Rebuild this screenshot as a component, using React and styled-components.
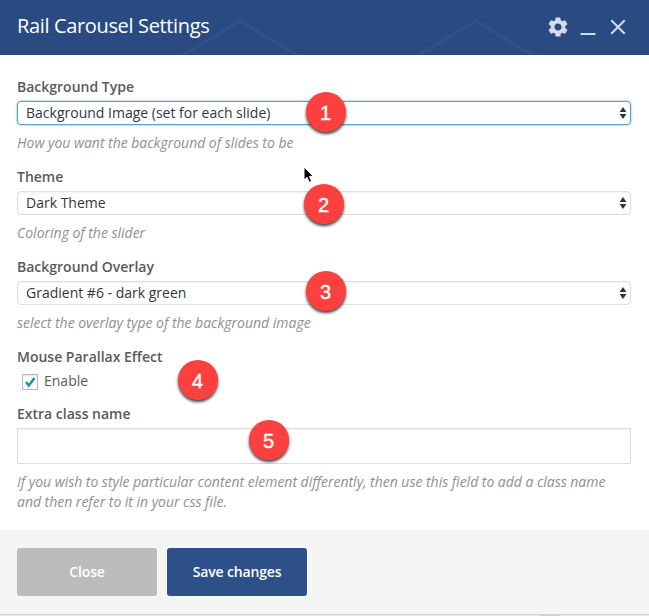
import React from 'react';
import styled, { createGlobalStyle } from 'styled-components';
import { MdSettings } from 'react-icons/md';

const GlobalStyle = createGlobalStyle`
  *, *::before, *::after { box-sizing: border-box; }
  body {
    margin: 0;
    background: #e9e9e9;
    font-family: 'Open Sans', sans-serif;
    font-size: 14px;
    line-height: 20px;
    color: #5a5a5a;
    overflow: hidden;
  }
`;

const Panel = styled.main`
  position: relative;
  display: flex;
  flex-direction: column;
  width: 649px;
  height: 616px;
`;

const Header = styled.header`
  position: relative;
  display: flex;
  align-items: center;
  justify-content: space-between;
  flex: none;
  height: 55px;
  padding: 0 23px 1px 17px;
  background: #2a4b82;
`;

const HeaderPattern = styled.svg`
  position: absolute;
  inset: 0;
`;

const Title = styled.h1`
  position: relative;
  margin: 0;
  padding-bottom: 2px;
  font-size: 20px;
  font-weight: 400;
  line-height: 30px;
  letter-spacing: -0.35px;
  color: #fff;
`;

const Controls = styled.div`
  position: relative;
  display: flex;
  align-items: center;
  color: #d4dcec;
`;

const IconButton = styled.button`
  display: flex;
  padding: 0;
  margin-left: ${(p) => p.$gap || 0}px;
  border: 0;
  background: none;
  color: inherit;
`;

const Body = styled.section`
  flex: none;
  height: 475px;
  padding: 22px 18px 0 17px;
  background: #fff;
`;

const Field = styled.div`
  margin-bottom: ${(p) => p.$space ?? 14}px;
`;

const Label = styled.div`
  margin-bottom: ${(p) => p.$space ?? 4}px;
  font-weight: 600;
`;

const SelectBox = styled.div`
  display: flex;
  align-items: center;
  justify-content: space-between;
  height: 24px;
  padding: 0 3px 1px 8px;
  border: 1px solid ${(p) => (p.$focused ? '#5b9dd9' : '#ddd')};
  border-radius: 4px;
  box-shadow: ${(p) => (p.$focused ? '0 0 2px rgba(30, 140, 190, 0.8)' : 'inset 0 1px 2px rgba(0, 0, 0, 0.06)')};
  color: #32373c;
`;

const Description = styled.p`
  margin: 8px 0 0;
  font-style: italic;
  color: #909090;
  word-spacing: -0.1px;
`;

const CheckRow = styled.label`
  display: flex;
  align-items: center;
  gap: 6px;
  padding-left: 5px;
`;

const CheckBox = styled.span`
  display: flex;
  width: 16px;
  height: 16px;
  margin-top: 2px;
  border: 1px solid #b4b9be;
  box-shadow: inset 0 1px 2px rgba(0, 0, 0, 0.1);
`;

const TextInput = styled.input`
  display: block;
  width: 100%;
  height: 36px;
  border: 1px solid #ddd;
  border-radius: 0;
  outline: 0;
  box-shadow: inset 0 1px 2px rgba(0, 0, 0, 0.07);
`;

const Footer = styled.footer`
  display: flex;
  gap: 10px;
  flex: none;
  height: 85px;
  padding: 18px 17px;
  background: #f5f5f5;
  border-bottom: 1px solid #d2d2d2;
`;

const PageEdge = styled.div`
  flex: none;
  width: 22px;
  height: 1px;
  margin-left: 539px;
  background: #cfcfcf;
`;

const Button = styled.button`
  width: 140px;
  height: 48px;
  padding: 0;
  border: 0;
  border-radius: 3px;
  background: ${(p) => (p.$primary ? '#2c5087' : '#bcbcbc')};
  color: #fff;
  font: 600 14px/20px 'Open Sans', sans-serif;
  letter-spacing: -0.15px;
`;

const Badge = styled.span`
  position: absolute;
  left: ${(p) => p.$x}px;
  top: ${(p) => p.$y}px;
  display: flex;
  align-items: center;
  justify-content: center;
  width: 40px;
  height: 40px;
  padding: 2px 1px 0 0;
  border-radius: 50%;
  background: #fc4040;
  box-shadow: 0 2px 3px rgba(0, 0, 0, 0.75);
  color: #fff;
  font: 400 20px/24px 'Liberation Sans', sans-serif;
  -webkit-text-stroke: 0.4px #fff;
`;

const Pointer = styled.svg`
  position: absolute;
  left: 303px;
  top: 166px;
`;

const fields = [
  { label: 'Background Type', value: 'Background Image (set for each slide)', hint: 'How you want the background of slides to be', focused: true },
  { label: 'Theme', value: 'Dark Theme', hint: 'Coloring of the slider' },
  { label: 'Background Overlay', value: 'Gradient #6 - dark green', hint: 'select the overlay type of the background image' },
];

const badges = [
  { x: 306, y: 92 },
  { x: 304, y: 184 },
  { x: 306, y: 271 },
  { x: 178, y: 360 },
  { x: 249, y: 420 },
];

const Arrows = () => (
  <svg width="8" height="14" viewBox="0 0 8 14" fill="#333">
    <path d="M4 1 7.4 6H.6zM4 13 .6 8h6.8z" />
  </svg>
);

export default function App() {
  return (
    <>
      <GlobalStyle />
      <Panel>
        <Header>
          <HeaderPattern width="649" height="55" fill="none" stroke="#305189" strokeWidth="3">
            <path d="M182 56 240 21l58 35M417 56l59-35 58 35" />
          </HeaderPattern>
          <Title>Rail Carousel Settings</Title>
          <Controls>
            <IconButton aria-label="Settings"><MdSettings size={24} /></IconButton>
            <IconButton aria-label="Minimize" $gap={10}>
              <svg width="16" height="18" viewBox="0 0 16 18"><path d="M.5 15h15v2H.5z" fill="currentColor" /></svg>
            </IconButton>
            <IconButton aria-label="Close" $gap={14}>
              <svg width="16" height="16" viewBox="0 0 16 16" fill="none" stroke="currentColor" strokeWidth="2">
                <path d="m1.3 1.3 13.4 13.4m0-13.4L1.3 14.7" />
              </svg>
            </IconButton>
          </Controls>
        </Header>
        <Body>
          {fields.map((f) => (
            <Field key={f.label}>
              <Label>{f.label}</Label>
              <SelectBox $focused={f.focused}>{f.value}<Arrows /></SelectBox>
              <Description>{f.hint}</Description>
            </Field>
          ))}
          <Field $space={13}>
            <Label>Mouse Parallax Effect</Label>
            <CheckRow>
              <CheckBox>
                <svg width="14" height="14" viewBox="0 0 14 14" fill="none" stroke="#1e8cbe" strokeWidth="2.5">
                  <path d="m3 7 2.8 3.5L11.5 3" />
                </svg>
              </CheckBox>
              Enable
            </CheckRow>
          </Field>
          <Field>
            <Label $space={4}>Extra class name</Label>
            <TextInput aria-label="Extra class name" />
            <Description>
              If you wish to style particular content element differently, then use this field to add a class name
              and then refer to it in your css file.
            </Description>
          </Field>
        </Body>
        <Footer>
          <Button>Close</Button>
          <Button $primary>Save changes</Button>
        </Footer>
        <PageEdge />
        {badges.map((b, i) => (
          <Badge key={i} $x={b.x} $y={b.y}>{i + 1}</Badge>
        ))}
        <Pointer width="12" height="19" viewBox="0 0 12 19">
          <path d="M1 1v13l3-2.7 2.2 5 2.4-1-2.2-4.9h4z" fill="#000" stroke="#fff" strokeWidth="1" />
        </Pointer>
      </Panel>
    </>
  );
}
